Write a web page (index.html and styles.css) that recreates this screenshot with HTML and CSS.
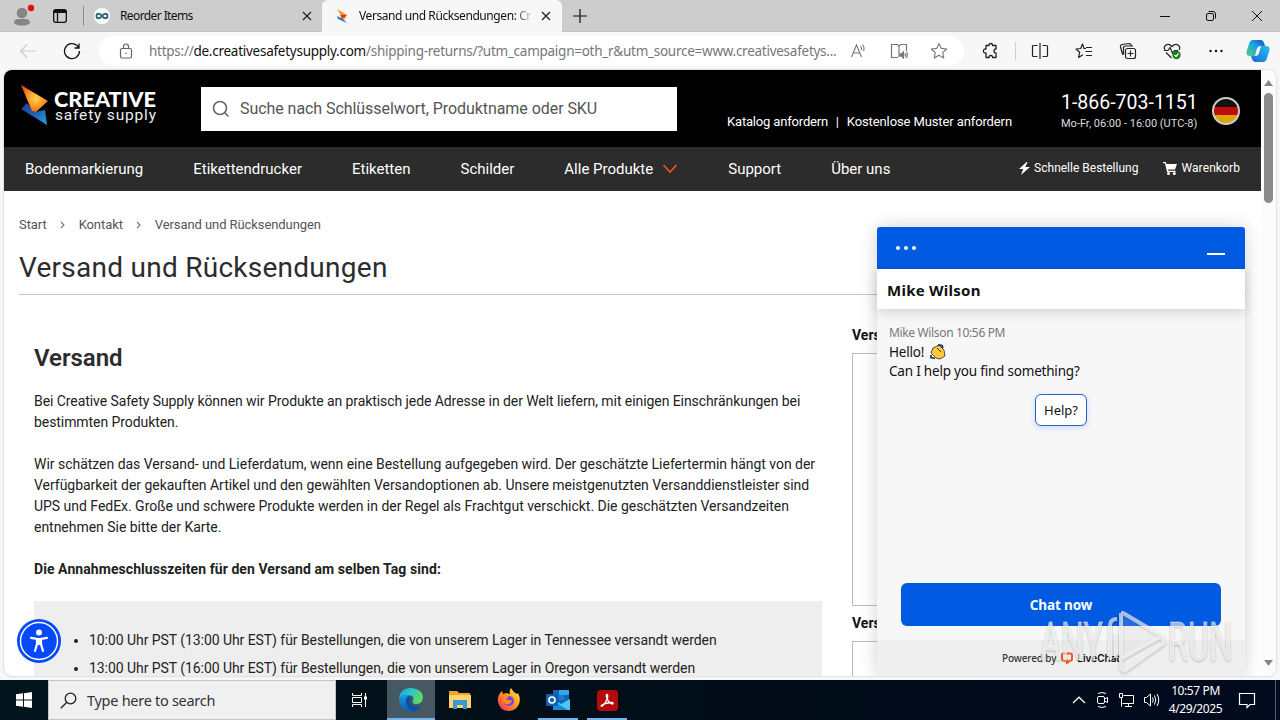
FILE: index.html
```html
<!DOCTYPE html>
<html lang="de">
<head>
  <meta charset="UTF-8" />
  <meta name="viewport" content="width=device-width, initial-scale=1.0" />
  <title>Versand und Rücksendungen</title>
  <link rel="stylesheet" href="styles.css">
</head>
<body>
  <div class="tabstrip">
    <div class="profile">
      <svg width="32" height="32" viewBox="0 0 32 32"><circle cx="16" cy="13" r="5.3" fill="#858585"/><path d="M8 23.500Q8 19 12 19H20Q24 19 24 23.500Q16 28 8 23.500Z" fill="#858585"/><circle cx="25" cy="8" r="3.200" fill="#e01010"/></svg>
    </div>
    <div class="workspaces">
      <svg width="16" height="16" viewBox="0 0 16 16" fill="none" stroke="#111" stroke-width="1.300"><rect x="1.700" y="1.700" width="12.600" height="12.600" rx="2"/><path d="M2 3.500H14" stroke-width="3"/><path d="M5.500 4V14"/></svg>
    </div>
    <div class="tab">
      <svg width="16" height="16" viewBox="0 0 16 16"><circle cx="8" cy="8" r="8" fill="#fff"/><path d="M8 8C6 5 2.500 5 2.500 8S6 11 8 8S13.500 5 13.500 8S10 11 8 8Z" fill="none" stroke="#35677a" stroke-width="1.900"/></svg>
      <span class="tab-title t1">Reorder Items</span>
      <svg class="tab-close" width="10" height="10" viewBox="0 0 10 10" stroke="#222" stroke-width="1.300"><path d="M1 1L9 9M9 1L1 9"/></svg>
    </div>
    <div class="tab active">
      <svg width="16" height="16" viewBox="0 0 16 16"><path d="M3 1L13 7L10 12Z" fill="#f8941d"/><path d="M6 7L13 7L8 11Z" fill="#d83b25"/><path d="M3 8L9 11L13 15L4 11Z" fill="#2376bd"/></svg>
      <span class="tab-title t2">Versand und Rücksendungen: Cr</span>
      <svg class="tab-close" width="10" height="10" viewBox="0 0 10 10" stroke="#222" stroke-width="1.300"><path d="M1 1L9 9M9 1L1 9"/></svg>
    </div>
    <svg class="new-tab" width="16" height="16" viewBox="0 0 16 16" stroke="#111" stroke-width="1.200"><path d="M8 1V15M1 8H15"/></svg>
    <div class="window-buttons">
      <svg width="12" height="12" viewBox="0 0 12 12" stroke="#111"><path d="M1 6.500H11"/></svg>
      <svg width="12" height="12" viewBox="0 0 12 12" stroke="#111" fill="none"><rect x="1.500" y="3.500" width="7" height="7" rx="1.500"/><path d="M3.500 1.500H8Q10.500 1.500 10.500 4V8.500"/></svg>
      <svg width="12" height="12" viewBox="0 0 12 12" stroke="#111"><path d="M1 1L11 11M11 1L1 11"/></svg>
    </div>
  </div>

  <div class="toolbar">
    <svg class="back" width="18" height="18" viewBox="0 0 18 18" stroke="#ccc" fill="none" stroke-width="1.200"><path d="M17 9H2M8 2.500L1.500 9L8 15.500"/></svg>
    <svg class="refresh" width="18" height="18" viewBox="0 0 18 18" stroke="#111" fill="none" stroke-width="1.300"><path d="M16.500 9A7.500 7.500 0 1 1 14 3.500L16 6M16 1.500V6H11.500"/></svg>
    <div class="address">
      <svg class="lock" width="16" height="18" viewBox="0 0 16 18" stroke="#666" fill="none" stroke-width="1.200"><rect x="2.500" y="6.500" width="11" height="9.500" rx="1.500"/><path d="M5.500 6.500V4.500Q5.500 2 8 2T10.500 4.500V6.500"/><circle cx="8" cy="11.200" r=".8" fill="#666" stroke="none"/></svg>
      <span class="url">https://<b>de.creativesafetysupply.com</b>/shipping-returns/?utm_campaign=oth_r&amp;utm_source=www.creativesafetys...</span>
      <div class="address-icons">
        <svg width="18" height="18" viewBox="0 0 18 18" stroke="#777" fill="none" stroke-width="1.100"><path d="M1.500 15L6.500 3L11.500 15M3.300 11H9.700M10.500 4Q12 6 11.500 8M12.500 2.500Q15 5.500 13.500 9"/></svg>
        <svg width="18" height="18" viewBox="0 0 18 18" stroke="#777" fill="none" stroke-width="1.200"><path d="M8 15.500H1.500V2.500H7.500L9 4V15M9 4L10.500 2.500H16.500V9"/><path d="M10 12H11.500L13.500 10V16L11.500 14H10Z" fill="#777"/><path d="M15 11.500Q16 13 15 14.500M16.500 10Q18 13 16.500 16"/></svg>
        <svg width="18" height="18" viewBox="0 0 18 18" stroke="#777" fill="none" stroke-width="1.100" stroke-linejoin="round"><path d="M9 1.500L11.300 6.400L16.700 7L12.700 10.700L13.800 16L9 13.300L4.200 16L5.300 10.700L1.300 7L6.700 6.400Z"/></svg>
      </div>
    </div>
    <svg class="extensions" width="18" height="18" viewBox="0 0 18 18" stroke="#222" fill="none" stroke-width="1.300"><path d="M4 3.500H7Q7 1.500 8.800 1.500T10.600 3.500H14V7Q12 7 12 9T14 11V15.500H10.600Q10.600 13.500 8.800 13.500T7 15.500H4V11Q1.500 11.500 1.500 9T4 7Z" stroke-linejoin="round"/></svg>
    <div class="toolbar-icons">
      <svg width="18" height="18" viewBox="0 0 18 18" stroke="#222" fill="none" stroke-width="1.200"><path d="M6.500 3.500H2.500Q1.500 3.500 1.500 4.500V13.500Q1.500 14.500 2.500 14.500H6.500M11.500 3.500H15.500Q16.500 3.500 16.500 4.500V13.500Q16.500 14.500 15.500 14.500H11.500M9 1V17"/></svg>
      <svg width="18" height="18" viewBox="0 0 18 18" stroke="#222" fill="none" stroke-width="1.200" stroke-linejoin="round"><path d="M11 6.500H9L7.500 2L5.700 6.500L1 7L4.700 10.200L3.500 15.500L8 12.800M11 5.500H17M10.500 9.500H17M11 13.500H17"/></svg>
      <svg width="18" height="18" viewBox="0 0 18 18" stroke="#222" fill="none" stroke-width="1.200"><rect x="6.500" y="6.500" width="10" height="10" rx="2"/><path d="M11.500 8.500V14.500M8.500 11.500H14.500M4.500 12.500L3.500 12L1.500 5Q1 3 3 2.500L10 1.500Q12 1.500 12.500 4M4.500 12.500V6Q4.500 4 6.500 4H14"/></svg>
      <svg width="18" height="18" viewBox="0 0 18 18" stroke="#222" fill="none" stroke-width="1.200"><path d="M2 8Q0 5 3 3Q6 1 9 4.500Q12 1 15 3Q18 5 16 8M3 10.500L8.500 16M1 8.500H5L7 5.500L9.500 11L11.500 8.500H15"/><circle cx="13.500" cy="13" r="4.200" fill="#16831b" stroke="none"/><path d="M11.500 13L13 14.500L15.500 11.500" stroke="#fff"/></svg>
      <svg width="18" height="18" viewBox="0 0 18 18" fill="#111"><circle cx="3.500" cy="9" r="1.200"/><circle cx="9" cy="9" r="1.200"/><circle cx="14.500" cy="9" r="1.200"/></svg>
    </div>
    <svg class="copilot" width="24" height="24" viewBox="0 0 24 24">
      <defs>
        <linearGradient id="cpA" x1="1" y1="0" x2="0" y2="1"><stop offset="0" stop-color="#1648b8"/><stop offset=".45" stop-color="#18a5e8"/><stop offset="1" stop-color="#52cf75"/></linearGradient>
        <linearGradient id="cpB" x1="0" y1="1" x2="1" y2="0"><stop offset="0" stop-color="#1767de"/><stop offset="1" stop-color="#27c2ee"/></linearGradient>
      </defs>
      <path d="M7 1H15Q17 1 18 4L19 7H14Q12 7 11 10L9 17H4Q-1 17 1 11L3 5Q4 1 7 1Z" fill="url(#cpA)"/>
      <path d="M17 23H9Q7 23 6 20L5 17H9Q12 17 13 14L15 7H20Q25 7 23 13L21 19Q20 23 17 23Z" fill="url(#cpB)"/>
      <path d="M11 9.500L13.500 7.500H14.500L12.500 14.500L10 16.500H9.500Z" fill="#f7f7f7"/>
    </svg>
  </div>

  <div class="viewport">
    <div class="page">
      <header class="header">
        <svg class="logo" width="140" height="44" viewBox="0 0 140 44">
          <defs>
            <radialGradient id="sun" cx=".55" cy=".5" r=".6"><stop offset="0" stop-color="#ffd34a"/><stop offset=".5" stop-color="#f89a24"/><stop offset="1" stop-color="#e4521b"/></radialGradient>
            <linearGradient id="sea" x1="0" y1="0" x2="1" y2="1"><stop offset="0" stop-color="#243b91"/><stop offset=".5" stop-color="#245fae"/><stop offset="1" stop-color="#18a5e5"/></linearGradient>
          </defs>
          <path d="M7 19L1 25L27 41L25 26L15 28Z" fill="url(#sea)"/>
          <path d="M1 1L28 17L16 28L12 27Z" fill="url(#sun)"/>
          <text x="34" y="23" class="logo-top" textLength="102" lengthAdjust="spacingAndGlyphs">CREATIVE</text>
          <text x="35" y="36" class="logo-bottom" textLength="101" lengthAdjust="spacing">safety supply</text>
        </svg>
        <div class="search">
          <svg width="18" height="18" viewBox="0 0 18 18" fill="none" stroke="#666" stroke-width="1.600"><circle cx="8" cy="8" r="6.500"/><path d="M12.500 12.500L16.500 16.500"/></svg>
          <span>Suche nach Schlüsselwort, Produktname oder SKU</span>
        </div>
        <div class="header-links"><span class="catalog">Katalog anfordern</span><i>|</i><span class="samples">Kostenlose Muster anfordern</span></div>
        <div class="phone">
          <div class="phone-number">1-866-703-1151</div>
          <div class="phone-hours">Mo-Fr, 06:00 - 16:00 (UTC-8)</div>
        </div>
        <div class="flag"></div>
      </header>

      <nav class="nav">
        <span>Bodenmarkierung</span>
        <span>Etikettendrucker</span>
        <span>Etiketten</span>
        <span>Schilder</span>
        <span class="has-menu">Alle Produkte <svg width="16" height="10" viewBox="0 0 16 10" fill="none" stroke="#e9541c" stroke-width="1.800"><path d="M1.500 1L8 8L14.500 1"/></svg></span>
        <span>Support</span>
        <span>Über uns</span>
        <div class="nav-right">
          <div><svg width="11" height="13" viewBox="0 0 11 13" fill="#fff"><path d="M7.500 0L0 7H4.200L2 13L11 5H6.300L8.500 0Z"/></svg><span class="quick">Schnelle Bestellung</span></div>
          <div><svg width="14" height="13" viewBox="0 0 14 13" fill="#fff"><path d="M0 0H2.800L3.500 2H14L12 7.500H5L5.300 8.700H12.500V10H4L2 1.300H0Z"/><circle cx="5.500" cy="11.500" r="1.500"/><circle cx="11.300" cy="11.500" r="1.500"/></svg><span class="cart">Warenkorb</span></div>
        </div>
      </nav>

      <div class="breadcrumb">
        <span>Start</span>
        <svg width="5" height="8" viewBox="0 0 5 8" fill="none" stroke="#777" stroke-width="1.100"><path d="M1 1L4 4L1 7"/></svg>
        <span>Kontakt</span>
        <svg width="5" height="8" viewBox="0 0 5 8" fill="none" stroke="#777" stroke-width="1.100"><path d="M1 1L4 4L1 7"/></svg>
        <span>Versand und Rücksendungen</span>
      </div>
      <h1>Versand und Rücksendungen</h1>

      <div class="columns">
        <main class="content">
          <h2>Versand</h2>
          <p class="intro">Bei Creative Safety Supply können wir Produkte an praktisch jede Adresse in der Welt liefern, mit einigen Einschränkungen bei<br>bestimmten Produkten.</p>
          <p>Wir schätzen das Versand- und Lieferdatum, wenn eine Bestellung aufgegeben wird. Der geschätzte Liefertermin hängt von der<br>Verfügbarkeit der gekauften Artikel und den gewählten Versandoptionen ab. Unsere meistgenutzten Versanddienstleister sind<br>UPS und FedEx. Große und schwere Produkte werden in der Regel als Frachtgut verschickt. Die geschätzten Versandzeiten<br>entnehmen Sie bitte der Karte.</p>
          <p class="strong">Die Annahmeschlusszeiten für den Versand am selben Tag sind:</p>
          <ul>
            <li>10:00 Uhr PST (13:00 Uhr EST) für Bestellungen, die von unserem Lager in Tennessee versandt werden</li>
            <li>13:00 Uhr PST (16:00 Uhr EST) für Bestellungen, die von unserem Lager in Oregon versandt werden</li>
          </ul>
        </main>
        <aside class="side">
          <h3>Versand</h3>
          <div class="map"></div>
          <h3>Versand</h3>
          <div class="map"></div>
        </aside>
      </div>
    </div>

    <div class="scrollbar">
      <svg width="9" height="6" viewBox="0 0 9 6" fill="#858585"><path d="M4.500 0L9 6H0Z"/></svg>
      <div class="thumb"></div>
      <svg class="down" width="9" height="6" viewBox="0 0 9 6" fill="#858585"><path d="M4.500 6L9 0H0Z"/></svg>
    </div>

    <svg class="a11y" width="44" height="44" viewBox="0 0 44 44">
      <circle cx="22" cy="22" r="22" fill="#0648fb"/>
      <circle cx="22" cy="22" r="18.500" fill="none" stroke="#fff" stroke-width="1.500"/>
      <circle cx="22" cy="13.500" r="3" fill="#fff"/>
      <path d="M14 18.800L20 20V25L18 32M30 18.800L24 20V25L26 32" fill="none" stroke="#fff" stroke-width="2.200" stroke-linecap="round"/>
      <path d="M19 19H25V26H19Z" fill="#fff"/>
    </svg>

    <div class="chat">
      <div class="chat-bar">
        <svg width="22" height="6" viewBox="0 0 22 6" fill="#fff"><circle cx="3" cy="3" r="2"/><circle cx="11" cy="3" r="2"/><circle cx="19" cy="3" r="2"/></svg>
        <div class="minimize"></div>
      </div>
      <div class="chat-agent"><span>Mike Wilson</span></div>
      <div class="chat-body">
        <div class="chat-meta">Mike Wilson 10:56 PM</div>
        <div class="chat-line"><span>Hello!</span>
          <svg width="16" height="16" viewBox="0 0 16 16"><path d="M3 4L9 1L14 6L15 12L10 15L6 14L1 9Z" fill="#ffc83d" stroke="#2b2410" stroke-width=".8"/><path d="M7 4L11 8" stroke="#4a3510"/><path d="M8 1L12 1.500L13 4M1 11V13.500L5 14.500" fill="none" stroke="#183c59" stroke-width="1.800"/></svg>
        </div>
        <div class="chat-line"><span>Can I help you find something?</span></div>
        <div class="chat-option"><span>Help?</span></div>
        <div class="chat-now"><span>Chat now</span></div>
      </div>
      <div class="chat-footer">
        <span class="powered">Powered by</span>
        <svg width="12" height="12" viewBox="0 0 12 12" fill="none" stroke="#f4591f" stroke-width="2"><path d="M2.500 1.500H9.500Q11 1.500 11 3V7Q11 8.500 9.500 8.500L6 11V8.500H2.500Q1 8.500 1 7V3Q1 1.500 2.500 1.500Z"/></svg>
        <span class="livechat">LiveChat</span>
      </div>
    </div>
  </div>

  <div class="taskbar">
    <div class="start">
      <svg width="16" height="16" viewBox="0 0 16 16" fill="#fff"><path d="M0 2.300L7 1.300V7.500H0ZM8 1.200L16 0V7.500H8ZM0 8.500H7V14.700L0 13.700ZM8 8.500H16V16L8 14.800Z"/></svg>
    </div>
    <div class="task-search">
      <svg width="17" height="17" viewBox="0 0 17 17" fill="none" stroke="#222" stroke-width="1.300"><circle cx="10.500" cy="6.500" r="5.300"/><path d="M6.800 10.200L.8 16.200"/></svg>
      <span>Type here to search</span>
    </div>
    <div class="task-view">
      <svg width="17" height="16" viewBox="0 0 17 16" fill="none" stroke="#fff"><path d="M1.500 1V3.500H10.500V1M1.500 15V12.500H10.500V15M1.500 5.500H10.500V10.500H1.500ZM14.500 1V15"/><path d="M13 4.500H16V7.500H13Z" fill="#fff" stroke="none"/></svg>
    </div>
    <div class="app open edge">
      <svg width="24" height="24" viewBox="0 0 24 24">
        <defs>
          <linearGradient id="edgeA" x1="0" y1="0" x2="1" y2=".4"><stop offset="0" stop-color="#19a6de"/><stop offset=".5" stop-color="#28c6cf"/><stop offset="1" stop-color="#61d763"/></linearGradient>
          <linearGradient id="edgeB" x1="0" y1="0" x2="0" y2="1"><stop offset="0" stop-color="#1b9de2"/><stop offset="1" stop-color="#1158ad"/></linearGradient>
        </defs>
        <path d="M0 11Q1 0 12 0Q24 1 24 10Q23 16 17 16Q13 16 14 13Q16 7 9 7Q3 7 0 11Z" fill="url(#edgeA)"/>
        <path d="M0 12Q3 6 9 7Q13 8 11 12Q10 17 15 18Q19 19 22 17Q19 24 12 24Q1 23 0 12Z" fill="url(#edgeB)"/>
        <path d="M9 8Q5 12 8 18Q10 22 14 23.500Q20 22 22 17Q16 20 13 17Q10 14 12 11Q12 8 9 8Z" fill="#104f9d"/>
      </svg>
    </div>
    <div class="app">
      <svg width="22" height="20" viewBox="0 0 22 20"><path d="M0 1H8L10 3H21V18H0Z" fill="#e7a72d"/><path d="M0 5H22V18H0Z" fill="#ffd46b"/><path d="M4 10H18V19H14V15H8V19H4Z" fill="#3a98d4"/></svg>
    </div>
    <div class="app">
      <svg width="24" height="24" viewBox="0 0 24 24">
        <defs><linearGradient id="fox" x1="1" y1="0" x2="0" y2="1"><stop offset="0" stop-color="#fff04a"/><stop offset=".45" stop-color="#ff9a1d"/><stop offset="1" stop-color="#f4225f"/></linearGradient></defs>
        <path d="M3 5L5 3L6 6L9 5L13 6Q12 2 14 0Q16 4 20 6L21 5Q24 11 22 16Q19 23 12 23Q3 23 1 14Q0 9 3 5Z" fill="url(#fox)"/><circle cx="12" cy="13" r="5" fill="#7542e5"/><path d="M4 7Q8 5 12 9L9 11Q11 13 15 12Q14 17 9 16Q5 15 4 7Z" fill="#ff8a1e"/>
      </svg>
    </div>
    <div class="app open">
      <svg width="24" height="22" viewBox="0 0 24 22"><path d="M7 1H23V16H7Z" fill="#1066b5"/><path d="M13 1H23V6H13Z" fill="#32a8e8"/><path d="M13 6H18V11H13Z" fill="#1480d0"/><path d="M7 10L15 15L24 10V21H7Z" fill="#50c5f3"/><path d="M7 12L22 21H7Z" fill="#168bd7"/><rect y="5" width="12" height="12" rx="1" fill="#0b62b6"/><circle cx="6" cy="11" r="3" fill="none" stroke="#fff" stroke-width="1.600"/></svg>
    </div>
    <div class="app open">
      <svg width="21" height="21" viewBox="0 0 21 21"><rect width="21" height="21" rx="3.500" fill="#b30b0b"/><path d="M10 4.500C12 4.500 10 12 5.500 16C2 17 5 13 15.500 12.500C18 15 12 15 9.500 7Q9 4.500 10 4.500Z" fill="none" stroke="#fff" stroke-width="1.300"/></svg>
    </div>
    <div class="tray">
      <svg width="14" height="8" viewBox="0 0 14 8" fill="none" stroke="#fff" stroke-width="1.200"><path d="M1 7L7 1.200L13 7"/></svg>
      <svg width="16" height="18" viewBox="0 0 16 18" fill="none" stroke="#fff"><rect x="3.500" y="5.500" width="7" height="7" rx="1.500"/><path d="M10.500 8L13.500 6.500V11.500L10.500 10M4 2.500Q8 .5 12 2.500M4 15.500Q8 17.500 12 15.500"/></svg>
      <svg width="17" height="16" viewBox="0 0 17 16" fill="none" stroke="#fff"><path d="M5.500 3.500H15.500V11.500H4.500M10.500 11.500V14.500M7 14.500H14M1.500 1.500H4.500V5.500H1.500ZM3.500 5.500V14.500"/></svg>
      <svg width="18" height="16" viewBox="0 0 18 16" fill="none" stroke="#fff"><path d="M1.500 5.500H3.500L7.500 2V14L3.500 10.500H1.500ZM9.500 5.500Q11 8 9.500 10.500M11.500 3.500Q14 8 11.500 12.500M14 2Q17.500 8 14 14"/></svg>
    </div>
    <div class="clock"><span>10:57 PM</span><span>4/29/2025</span></div>
    <svg class="notify" width="18" height="18" viewBox="0 0 18 18" fill="none" stroke="#fff" stroke-width="1.200"><path d="M1.500 2.500H16.500V13.500H12L9 16.500V13.500H1.500Z"/></svg>
    <div class="show-desktop"></div>
  </div>

  <svg class="watermark" width="200" height="70" viewBox="0 0 200 70">
    <text x="3" y="52" textLength="63" lengthAdjust="spacingAndGlyphs">ANY</text>
    <text x="131" y="52" textLength="64" lengthAdjust="spacingAndGlyphs">RUN</text>
    <path class="mark-fill" d="M84 6L125 29L84 52Z"/>
    <path class="mark" d="M73 52V18Q73 11 80 11M79 50V24M84 5V51L125 28L86 5H84M84 51V61L88 63L127 35L125 28"/>
  </svg>
</body>
</html>
```
FILE: styles.css
```css
* {
  box-sizing: border-box;
}

body {
  margin: 0;
  width: 1280px;
  height: 720px;
  display: flex;
  flex-direction: column;
  overflow: hidden;
  position: relative;
  background: #f7f7f7;
  font-family: "Noto Sans", "Open Sans", sans-serif;
  font-size: 12px;
  color: #111;
}

svg {
  display: block;
  flex: none;
}

span {
  white-space: nowrap;
}

/* browser tabs */
.tabstrip {
  height: 32px;
  flex: none;
  display: flex;
  align-items: center;
  background: #cdcdcd;
  border-bottom: 1px solid #c2c2c2;
}

.profile {
  width: 32px;
  margin-left: 6px;
}

.workspaces {
  width: 46px;
  height: 20px;
  padding: 2px 0 0 14px;
  border-right: 1px solid #8c8c8c;
}

.tab {
  display: flex;
  align-items: center;
  width: 238px;
  height: 32px;
  padding: 0 10px;
}

.tab.active {
  width: 240px;
  background: #f7f7f7;
  border-radius: 6px 6px 0 0;
  padding: 0 11px 0 12px;
}

.tab-title {
  margin-left: 10px;
}

.active .tab-title {
  margin-left: 9px;
  width: 176px;
  -webkit-mask-image: linear-gradient(to right, #000 154px, transparent 176px);
  mask-image: linear-gradient(to right, #000 154px, transparent 176px);
}

.t1 {
  letter-spacing: -0.6px;
}

.t2 {
  letter-spacing: -0.42px;
}

.tab-close {
  margin-left: auto;
}

.new-tab {
  margin-left: 10px;
}

.window-buttons {
  margin-left: auto;
  display: flex;
  gap: 34px;
  padding-right: 17px;
}

/* toolbar */
.toolbar {
  height: 38px;
  flex: none;
  display: flex;
  align-items: center;
  padding-left: 19px;
}

.refresh {
  margin-left: 26px;
}

.address {
  display: flex;
  align-items: center;
  width: 865px;
  height: 30px;
  margin-left: 18px;
  padding-left: 19px;
  border-radius: 15px;
  background: #fff;
}

.url {
  margin-left: 15px;
  width: 692px;
  font-size: 13.5px;
  letter-spacing: -0.26px;
  color: #777;
}

.url b {
  font-weight: 400;
  color: #111;
}

.address-icons {
  display: flex;
  gap: 22px;
  margin-left: 9px;
}

.extensions {
  margin-left: 18px;
}

.toolbar-icons {
  display: flex;
  gap: 26px;
  margin-left: 15px;
  padding-left: 15px;
  border-left: 1px solid #d0d0d0;
}

.copilot {
  margin-left: 21px;
}

/* page area */
.viewport {
  position: relative;
  display: flex;
  height: 606px;
  flex: none;
  margin: 0 4px 4px;
  background: #fff;
  border-radius: 8px;
  overflow: hidden;
  box-shadow: 0 0 2px rgba(0, 0, 0, 0.3);
  font-family: Roboto, sans-serif;
}

.page {
  width: 1257px;
  height: 606px;
  overflow: hidden;
}

.header {
  display: flex;
  height: 77px;
  background: #000;
  color: #fff;
}

.logo {
  margin: 14px 0 0 16px;
}

.logo-top {
  font: 900 21px Lato, sans-serif;
  fill: #fff;
}

.logo-bottom {
  font: 400 15.500px Roboto, sans-serif;
  fill: #eee;
}

.search {
  display: flex;
  align-items: center;
  width: 476px;
  height: 44px;
  margin: 17px 0 0 41px;
  padding: 0 0 1px 11px;
  gap: 10px;
  background: #fff;
  color: #555;
  font-size: 16px;
  letter-spacing: -0.06px;
}

.header-links {
  display: flex;
  width: 285px;
  margin: 44px 0 0 50px;
  justify-content: space-between;
  font-size: 13px;
  line-height: 16px;
}

.catalog {
  letter-spacing: -0.17px;
}

.samples {
  letter-spacing: -0.11px;
}

.header-links i {
  font-style: normal;
}

.phone {
  width: 136px;
  margin: 21px 0 0 49px;
  text-align: right;
  white-space: nowrap;
}

.phone-number {
  font-size: 19.500px;
  line-height: 24px;
}

.phone-hours {
  font-size: 11px;
  line-height: 18px;
  color: #ddd;
}

.flag {
  width: 28px;
  height: 28px;
  margin: 27px 0 0 15px;
  border: 2px solid #ccc;
  border-radius: 50%;
  background: linear-gradient(#111 33%, #c00b0b 33% 66%, #d9a70d 66%);
}

.nav {
  display: flex;
  align-items: center;
  height: 44px;
  padding: 0 21px;
  gap: 50px;
  background: #2c2c2c;
  color: #fff;
  font-size: 15px;
}

.has-menu {
  display: flex;
  align-items: center;
  gap: 9px;
}

.nav-right {
  display: flex;
  gap: 25px;
  margin-left: auto;
  padding-bottom: 2px;
  font-size: 12px;
}

.nav-right div {
  display: flex;
  align-items: center;
  gap: 4px;
}

.cart {
  letter-spacing: 0.1px;
}

.breadcrumb {
  display: flex;
  align-items: center;
  margin: 23px 0 0 15px;
  height: 20px;
  font-size: 13px;
  letter-spacing: -0.08px;
  color: #555;
}

.breadcrumb svg {
  margin: 2px 14px 0 13px;
}

h1 {
  margin: 16px 15px 0;
  height: 45px;
  padding-top: 1px;
  border-bottom: 1px solid #c4c4c4;
  font-size: 28px;
  font-weight: 400;
  line-height: 34px;
  letter-spacing: 0.26px;
  color: #2c2c2c;
}

.columns {
  display: flex;
  justify-content: space-between;
  padding: 0 16px 0 30px;
}

.content {
  width: 788px;
  font-size: 14px;
  line-height: 21px;
  letter-spacing: -0.025px;
  color: #222;
  white-space: nowrap;
}

h2 {
  margin: 47px 0 17px;
  font-size: 24px;
  font-weight: 600;
  line-height: 32px;
  color: #2c2c2c;
}

.content p {
  margin: 0 0 21px;
}

.content .intro {
  letter-spacing: -0.072px;
}

.strong {
  font-weight: 700;
  letter-spacing: 0.07px;
}

.content ul {
  margin: 0;
  height: 120px;
  padding: 25px 0 0 55px;
  background: #eee;
  letter-spacing: -0.06px;
}

.content li {
  line-height: 28px;
}

.side {
  width: 393px;
  padding-top: 31px;
}

h3 {
  margin: 0;
  font-size: 14px;
  line-height: 18px;
  height: 27px;
}

.map {
  height: 253px;
  margin-bottom: 8px;
  border: 1px solid #bbb;
}

.scrollbar {
  display: flex;
  flex-direction: column;
  align-items: center;
  width: 15px;
  padding: 10px 0;
  background: #fcfcfc;
}

.thumb {
  width: 9px;
  height: 110px;
  margin-top: 7px;
  border-radius: 5px;
  background: #8b8b8b;
}

.down {
  margin-top: auto;
}

.a11y {
  position: absolute;
  left: 13px;
  top: 549px;
}

/* chat widget */
.chat {
  position: absolute;
  left: 873px;
  top: 157px;
  width: 368px;
  height: 449px;
  display: flex;
  flex-direction: column;
  background: #f7f7f7;
  border-radius: 3px 3px 0 0;
  box-shadow: 0 0 18px rgba(0, 0, 0, 0.18);
  font-family: "Noto Sans", "Open Sans", sans-serif;
}

.chat-bar {
  display: flex;
  justify-content: space-between;
  height: 42px;
  padding: 18px 20px 0 18px;
  background: #005ae2;
  border-radius: 3px 3px 0 0;
}

.minimize {
  width: 18px;
  height: 2px;
  margin-top: 8px;
  background: #fff;
}

.chat-agent {
  height: 40px;
  padding-left: 10px;
  background: #fff;
  box-shadow: 0 3px 12px rgba(0, 0, 0, 0.15);
  font-size: 15px;
  font-weight: 700;
  line-height: 43px;
  letter-spacing: 0.25px;
}

.chat-body {
  flex: 1;
  display: flex;
  flex-direction: column;
  padding: 15px 24px 14px 12px;
}

.chat-meta {
  line-height: 18px;
  letter-spacing: -0.35px;
  color: #777;
}

.chat-line {
  display: flex;
  align-items: center;
  gap: 6px;
  height: 19px;
  font-size: 13.500px;
  letter-spacing: -0.2px;
}

.chat-option {
  align-self: center;
  width: 52px;
  height: 32px;
  margin: 14px 0 0 12px;
  border: 1px solid #2463c4;
  border-radius: 6px;
  background: #fff;
  box-shadow: 0 2px 6px rgba(0, 90, 226, 0.18);
  font-size: 13px;
  line-height: 31px;
  text-align: center;
}

.chat-now {
  margin: auto 0 0 12px;
  height: 43px;
  border-radius: 6px;
  background: #005ae2;
  color: #fff;
  font-size: 13.500px;
  font-weight: 700;
  line-height: 44px;
  letter-spacing: -0.1px;
  text-align: center;
}

.chat-footer {
  display: flex;
  align-items: center;
  justify-content: center;
  gap: 5px;
  height: 36px;
  background: #efefef;
  font-size: 10px;
}

.powered {
  color: #333;
  font-weight: 500;
  letter-spacing: -0.15px;
}

.livechat {
  font-family: Inter, sans-serif;
  font-weight: 600;
  margin-left: -1px;
}

/* taskbar */
.taskbar {
  display: flex;
  align-items: center;
  height: 40px;
  flex: none;
  background: linear-gradient(to right, #02151d, #010d17 50%, #020a1e);
  color: #fff;
}

.start {
  width: 48px;
  padding-left: 16px;
}

.task-search {
  display: flex;
  align-items: center;
  gap: 10px;
  width: 288px;
  height: 40px;
  padding-left: 11px;
  background: #f0f0f0;
  border: 1px solid #c4c4c4;
  color: #333;
  font-size: 14.500px;
  letter-spacing: -0.28px;
}

.task-view {
  width: 51px;
  padding-left: 15px;
}

.app {
  display: flex;
  align-items: center;
  justify-content: center;
  width: 40px;
  height: 40px;
  margin-right: 9px;
}

.app.open {
  border-bottom: 2px solid #76b3ee;
  padding-top: 2px;
}

.app.edge {
  width: 48px;
  margin-right: 5px;
  background: #465963;
}

.tray {
  display: flex;
  align-items: center;
  gap: 8px;
  margin-left: auto;
}

.clock {
  display: flex;
  flex-direction: column;
  align-items: center;
  width: 69px;
  line-height: 18px;
  letter-spacing: -0.4px;
}

.notify {
  margin-left: 8px;
}

.show-desktop {
  width: 5px;
  height: 40px;
  margin-left: 19px;
  border-left: 1px solid #56606c;
}

.watermark {
  position: absolute;
  left: 1037px;
  top: 608px;
  filter: drop-shadow(0 1px 1px rgba(0, 0, 0, 0.35));
}

.watermark text {
  font: 400 53px Roboto, sans-serif;
  fill: rgba(255, 255, 255, 0.6);
  stroke: rgba(255, 255, 255, 0.5);
  stroke-width: 1;
}

.mark {
  fill: none;
  stroke: rgba(255, 255, 255, 0.65);
  stroke-width: 4;
  stroke-linejoin: round;
}

.mark-fill {
  fill: rgba(255, 255, 255, 0.15);
}
```
